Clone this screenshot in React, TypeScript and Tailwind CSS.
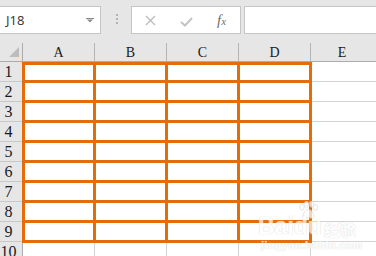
import React from 'react';

const cols = ['A', 'B', 'C', 'D'];
const rows = [1, 2, 3, 4, 5, 6, 7, 8, 9];

const Paw = () => (
  <svg width="22" height="18" viewBox="0 0 22 18" className="block">
    <g fill="#ffffff" stroke="#dadada" strokeWidth="1">
      <ellipse cx="5" cy="6" rx="2.2" ry="3" />
      <ellipse cx="9.5" cy="3.2" rx="2.2" ry="3" />
      <ellipse cx="14.5" cy="3.2" rx="2.2" ry="3" />
      <ellipse cx="18.5" cy="6.5" rx="2.2" ry="3" />
      <path d="M6 15 C7 10 9.5 8.5 11.5 8.5 C14 8.5 16 10.5 17 15 C17.5 17.5 14 17.5 11.5 16.5 C9 17.5 5.5 17.5 6 15 Z" />
    </g>
  </svg>
);

export default function App() {
  return (
    <div className="relative w-[376px] h-[256px] overflow-hidden bg-[#e6e6e6] font-['Liberation_Serif',serif]">
      {/* formula bar */}
      <div className="flex items-start h-[43px] pt-[6px]">
        <div className="w-[101px] h-[28px] bg-white border border-l-0 border-[#c6c6c6] flex items-center justify-between pl-[6px] pr-[6px]">
          <span className="font-['Noto_Sans',sans-serif] text-[13px] text-[#3b3b3b] leading-none">J18</span>
          <svg width="8" height="5" viewBox="0 0 8 5" className="block">
            <rect x="0" y="0" width="8" height="1" fill="#8a8a8a" />
            <path d="M1 1.5 L7 1.5 L4 4.5 Z" fill="#8a8a8a" />
          </svg>
        </div>
        <div className="ml-[15px] mt-[8px] flex flex-col gap-[2px]">
          <div className="w-[2px] h-[2px] bg-[#b3b3b3]" />
          <div className="w-[2px] h-[2px] bg-[#b3b3b3]" />
          <div className="w-[2px] h-[2px] bg-[#b3b3b3]" />
        </div>
        <div className="ml-[13px] w-[110px] h-[28px] bg-white border border-[#c6c6c6] flex items-center pl-[13px]">
          <svg width="11" height="11" viewBox="0 0 11 11" className="block">
            <path d="M1 1 L10 10 M10 1 L1 10" stroke="#bdbdbd" strokeWidth="1.4" />
          </svg>
          <svg width="13" height="10" viewBox="0 0 13 10" className="block ml-[24px] mt-[3px]">
            <path d="M1 5 L5 8.5 L12 1" stroke="#c4c4c4" strokeWidth="2" fill="none" />
          </svg>
          <span className="ml-[24px] italic text-[#6f6f6f] text-[15px] leading-none">
            f<span className="text-[11px]">x</span>
          </span>
        </div>
        <div className="ml-[3px] flex-1 h-[28px] bg-white border border-r-0 border-[#c6c6c6]" />
      </div>

      {/* column headers */}
      <div className="flex h-[19px] border-b border-[#ababab] text-[14px] text-[#1a1a1a]">
        <div className="w-[23px] border-r border-[#ababab] relative">
          <svg width="10" height="10" viewBox="0 0 10 10" className="absolute left-[9px] top-[4px]">
            <path d="M10 0 L10 10 L0 10 Z" fill="#bdbdbd" />
          </svg>
        </div>
        {cols.map((c) => (
          <div key={c} className="w-[72px] border-r border-[#b4b4b4] flex items-center justify-center leading-none pt-[1px]">
            {c}
          </div>
        ))}
        <div className="flex-1 flex items-center justify-center leading-none pt-[1px] pr-[3px]">E</div>
      </div>

      {/* sheet body */}
      <div className="flex bg-white">
        <div className="w-[23px] bg-[#e6e6e6] border-r border-[#ababab] text-[16px] text-[#1a1a1a]">
          {[...rows, 10].map((r) => (
            <div key={r} className="h-[20px] border-b border-[#c8c8c8] flex items-center pt-[1px]">
              <span className="w-[17px] text-center leading-none">{r}</span>
            </div>
          ))}
        </div>
        <div className="-ml-px w-[290px]">
          <div className="border-l-[3px] border-t-[3px] border-[#e46c0a]">
            {rows.map((r) => (
              <div key={r} className={`flex ${r === 1 ? 'h-[18px]' : 'h-[20px]'}`}>
                {cols.map((c, i) => (
                  <div
                    key={c}
                    className={`${i === 0 ? 'w-[71px]' : 'w-[72px]'} border-r-[3px] border-b-[3px] border-[#e46c0a]`}
                  />
                ))}
              </div>
            ))}
          </div>
          <div className="flex h-[20px]">
            <div className="w-[73px] border-r border-[#d4d4d4]" />
            <div className="w-[72px] border-r border-[#d4d4d4]" />
            <div className="w-[72px] border-r border-[#d4d4d4]" />
            <div className="w-[72px] border-r border-[#d4d4d4]" />
          </div>
        </div>
        <div className="flex-1">
          {[...rows, 10].map((r) => (
            <div key={r} className="h-[20px] border-b border-[#d4d4d4]" />
          ))}
        </div>
      </div>

      {/* watermark */}
      <div className="absolute left-[258px] top-[201px] flex flex-col items-start font-['Liberation_Sans',sans-serif] text-white opacity-70 [text-shadow:0_0_1px_#d0d0d0,0_0_1px_#d0d0d0]">
        <div className="flex items-end">
          <span className="text-[23px] font-bold leading-none">Bai</span>
          <div className="flex flex-col items-center">
            <Paw />
            <span className="text-[23px] font-bold leading-none -mt-[4px]">du</span>
          </div>
          <span className="ml-[2px] font-['Noto_Sans_CJK_SC',sans-serif] text-[16px] font-bold leading-none mb-[1px]">经验</span>
        </div>
        <span className="ml-[3px] mt-[2px] text-[11px] font-bold leading-none tracking-[0.3px]">jingyan.baidu.com</span>
      </div>
    </div>
  );
}
